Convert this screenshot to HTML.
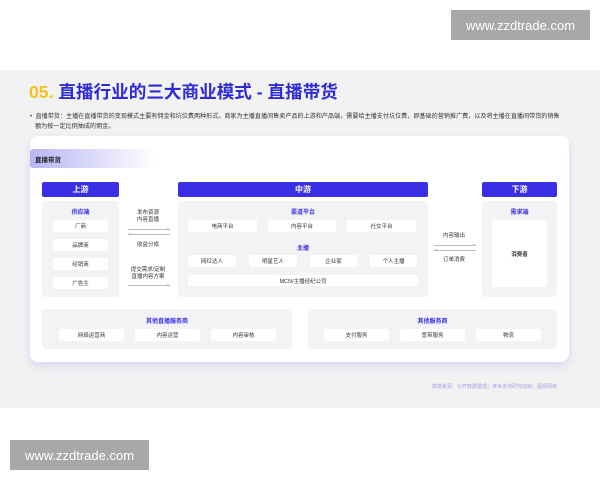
<!DOCTYPE html><html><head><meta charset="utf-8"><style>
*{margin:0;padding:0;box-sizing:border-box}
body{width:600px;height:480px;background:#fff;position:relative;overflow:hidden;font-family:"Liberation Sans","Noto Sans CJK SC",sans-serif;}
.a{position:absolute}
.bg{left:0;top:70px;width:600px;height:338px;background:#f2f2f3}
.wm{background:#a8a8a8;color:#fff;font-size:13px;display:flex;align-items:center;justify-content:center}
.card{left:30px;top:136px;width:539px;height:226px;background:#fff;border-radius:8px;box-shadow:0 4px 8px rgba(140,130,230,.25)}
.hd{background:#3b2fe6;color:#fff;font-size:8px;font-weight:bold;border-radius:2px;display:flex;align-items:center;justify-content:center;height:15px;top:182px}
.gb{background:#f3f3f5;border-radius:4px}
.it{background:#fff;font-size:5.5px;color:#333;display:flex;align-items:center;justify-content:center;border-radius:2px}
.lb{font-size:6px;color:#3b2fe6;font-weight:bold;text-align:center}
.tx{font-size:5.5px;color:#333;text-align:center;line-height:7px}
.ar{height:0;border-top:0.6px solid #bbb}
.ar.r::after{content:"";position:absolute;right:0;top:-2px;border-left:3px solid #bbb;border-top:1.5px solid transparent;border-bottom:1.5px solid transparent}
.ar.l::after{content:"";position:absolute;left:0;top:-2px;border-right:3px solid #bbb;border-top:1.5px solid transparent;border-bottom:1.5px solid transparent}
</style></head><body>
<div class="a bg"></div>
<div class="a wm" style="left:451px;top:10px;width:139px;height:30px">www.zzdtrade.com</div>
<div class="a wm" style="left:10px;top:440px;width:139px;height:30px">www.zzdtrade.com</div>
<div class="a" style="left:29px;top:79px;font-size:17.6px;font-weight:bold;color:#2d2bd8;white-space:nowrap"><span style="color:#f5c21b">05.</span> 直播行业的三大商业模式 - 直播带货</div>
<div class="a" style="left:30px;top:112px;width:545px;font-size:6.1px;line-height:10px;color:#333;white-space:nowrap">• &nbsp;直播带货：主播在直播带货的变现模式主要有佣金和坑位费两种形式。商家为主播直播间售卖产品的上游和产品端，需要给主播支付坑位费，即基础的营销推广费，以及将主播在直播间带货的销售<br>&nbsp;&nbsp;&nbsp;额为按一定比例抽成的佣金。</div>
<div class="a card"></div>
<div class="a" style="left:30px;top:149px;width:125px;height:19px;border-radius:3px 0 0 3px;background:linear-gradient(90deg,#b9b4f3,#fff);font-size:6.5px;font-weight:bold;color:#222;padding:5px 0 0 5px">直播带货</div>
<div class="a hd" style="left:42px;width:77px">上游</div>
<div class="a hd" style="left:178px;width:250px">中游</div>
<div class="a hd" style="left:482px;width:75px">下游</div>
<div class="a gb" style="left:42px;top:201px;width:77px;height:96px"></div>
<div class="a lb" style="left:42px;top:207px;width:77px">供应端</div>
<div class="a it" style="left:53px;top:220px;width:55px;height:12px">厂商</div>
<div class="a it" style="left:53px;top:239px;width:55px;height:12px">品牌商</div>
<div class="a it" style="left:53px;top:258px;width:55px;height:12px">经销商</div>
<div class="a it" style="left:53px;top:277px;width:55px;height:12px">广告主</div>
<div class="a tx" style="left:126px;top:210px;width:44px">发布资源<br>内容直播</div>
<div class="a ar r" style="left:128px;top:229px;width:42px"></div>
<div class="a ar l" style="left:128px;top:234px;width:42px"></div>
<div class="a tx" style="left:126px;top:242px;width:44px">收益分成</div>
<div class="a tx" style="left:124px;top:267px;width:48px">提交需求/定制<br>直播内容方案</div>
<div class="a ar r" style="left:128px;top:285px;width:42px"></div>
<div class="a gb" style="left:178px;top:201px;width:250px;height:96px"></div>
<div class="a lb" style="left:178px;top:207px;width:250px">渠道平台</div>
<div class="a it" style="left:188px;top:220px;width:69px;height:12px">电商平台</div>
<div class="a it" style="left:268px;top:220px;width:68px;height:12px">内容平台</div>
<div class="a it" style="left:347px;top:220px;width:69px;height:12px">社交平台</div>
<div class="a lb" style="left:178px;top:243px;width:250px">主播</div>
<div class="a it" style="left:188px;top:255px;width:48px;height:12px">网红达人</div>
<div class="a it" style="left:249px;top:255px;width:48px;height:12px">明星艺人</div>
<div class="a it" style="left:310px;top:255px;width:47px;height:12px">企业家</div>
<div class="a it" style="left:370px;top:255px;width:47px;height:12px">个人主播</div>
<div class="a it" style="left:188px;top:275px;width:230px;height:11px">MCN/主播经纪公司</div>
<div class="a tx" style="left:432px;top:233px;width:44px">内容输出</div>
<div class="a ar r" style="left:434px;top:245px;width:42px"></div>
<div class="a ar l" style="left:434px;top:250px;width:42px"></div>
<div class="a tx" style="left:432px;top:257px;width:44px">订单消费</div>
<div class="a gb" style="left:482px;top:201px;width:75px;height:96px"></div>
<div class="a lb" style="left:482px;top:207px;width:75px">需求端</div>
<div class="a it" style="left:492px;top:220px;width:55px;height:67px;font-weight:bold">消费者</div>
<div class="a gb" style="left:42px;top:309px;width:250px;height:40px"></div>
<div class="a lb" style="left:42px;top:316px;width:250px">其他直播服务商</div>
<div class="a it" style="left:59px;top:329px;width:65px;height:12px">网络运营商</div>
<div class="a it" style="left:135px;top:329px;width:65px;height:12px">内容运营</div>
<div class="a it" style="left:211px;top:329px;width:65px;height:12px">内容审核</div>
<div class="a gb" style="left:308px;top:309px;width:249px;height:40px"></div>
<div class="a lb" style="left:308px;top:316px;width:249px">其他服务商</div>
<div class="a it" style="left:324px;top:329px;width:65px;height:12px">支付服务</div>
<div class="a it" style="left:400px;top:329px;width:65px;height:12px">宽带服务</div>
<div class="a it" style="left:476px;top:329px;width:65px;height:12px">物流</div>
<div class="a" style="left:432px;top:383px;font-size:5px;color:#a9a2e6;white-space:nowrap">数据来源：公开数据整理；准世咨询研究绘制；图源网络</div>
</body></html>
